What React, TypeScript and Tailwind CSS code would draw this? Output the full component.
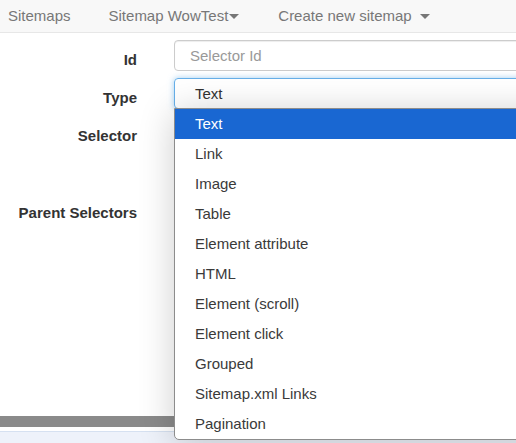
import React from 'react';

const options = [
    'Text',
    'Link',
    'Image',
    'Table',
    'Element attribute',
    'HTML',
    'Element (scroll)',
    'Element click',
    'Grouped',
    'Sitemap.xml Links',
    'Pagination',
];

function Caret() {
    return <span className="inline-block ml-[1px] align-middle w-0 h-0 border-x-[5px] border-x-transparent border-t-[5px] border-t-[#777]" />;
}

function FormRow({ label, height, children }: { label: string; height: string; children?: React.ReactNode }) {
    return (
        <div className={`flex ${height}`}>
            <label className="w-[137px] shrink-0 text-right font-bold text-[#333] pt-[10px]">{label}</label>
            <div className="ml-[37px] flex-1 min-w-0">{children}</div>
        </div>
    );
}

export default function App() {
    return (
        <div
            className="relative w-[516px] h-[443px] overflow-hidden bg-white flex flex-col text-[15px] leading-[20px]"
            style={{ fontFamily: '"Liberation Sans", Arial, sans-serif' }}
        >
            {/* Navbar */}
            <nav className="h-[33px] shrink-0 bg-[#f8f8f8] border-b border-[#e7e7e7] flex items-center text-[#777]">
                <span className="ml-[8px]">Sitemaps</span>
                <span className="ml-[38px] flex items-center">Sitemap WowTest<Caret /></span>
                <span className="ml-[39px] flex items-center">Create new sitemap<span className="ml-[7px] flex"><Caret /></span></span>
            </nav>

            {/* Form */}
            <div className="flex-1 flex flex-col pt-[7px] gap-[7px]">
                <FormRow label="Id" height="h-[31px]">
                    <div className="h-[31px] w-[400px] border border-[#ccc] rounded-[4px] pl-[15px] flex items-center text-[#999] shadow-[inset_0_1px_1px_rgba(0,0,0,0.075)]">
                        Selector Id
                    </div>
                </FormRow>
                <FormRow label="Type" height="h-[31px]">
                    <div className="h-[31px] w-[400px] border border-[#66afe9] rounded-[4px] pl-[20px] flex items-center text-[#333] shadow-[0_0_6px_rgba(102,175,233,0.6)]">
                        Text
                    </div>
                </FormRow>
                <FormRow label="Selector" height="h-[70px]" />
                <FormRow label="Parent Selectors" height="h-[100px]" />
            </div>

            {/* Scrollbar + footer */}
            <div className="h-[11px] shrink-0 bg-[#8a8a8a] mb-[4px]" />
            <div className="h-[12px] shrink-0 bg-[#eef2fa] border-t border-[#d6e1f1]" />

            {/* Native select dropdown */}
            <ul className="absolute left-[174px] top-[108px] w-[400px] bg-white border border-[#8c8c8c] rounded-b-[5px] shadow-[0_4px_36px_rgba(0,0,0,0.2)] text-[#3a3a3a]">
                {options.map((opt, i) => (
                    <li
                        key={opt}
                        className={`h-[30px] pl-[20px] flex items-center ${i === 0 ? 'bg-[#1967d2] text-white' : ''}`}
                    >
                        {opt}
                    </li>
                ))}
            </ul>
        </div>
    );
}
